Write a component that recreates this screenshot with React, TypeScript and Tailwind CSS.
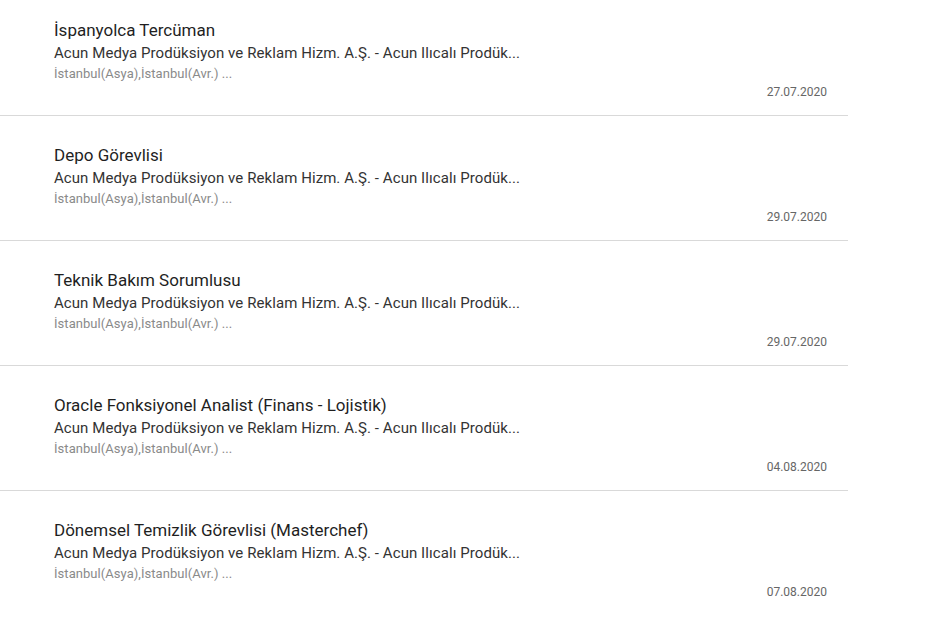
const jobs = [
  { title: 'İspanyolca Tercüman', date: '27.07.2020' },
  { title: 'Depo Görevlisi', date: '29.07.2020' },
  { title: 'Teknik Bakım Sorumlusu', date: '29.07.2020' },
  { title: 'Oracle Fonksiyonel Analist (Finans - Lojistik)', date: '04.08.2020' },
  { title: 'Dönemsel Temizlik Görevlisi (Masterchef)', date: '07.08.2020' },
];

const company = 'Acun Medya Prodüksiyon ve Reklam Hizm. A.Ş. - Acun Ilıcalı Prodük...';

export default function App() {
  return (
    <div className="h-[640px] overflow-hidden bg-white font-['Roboto',sans-serif]">
      <ul className="w-[848px] -mt-[9px]">
        {jobs.map((job) => (
          <li key={job.title} className="h-[125px] border-b border-[#d9d9d9] last:border-b-0 pl-[54px] pr-[21px] pt-[27px] flex flex-col">
            <div className="text-[17px] leading-[25px] text-[#1f1f1f]">{job.title}</div>
            <div className="text-[15px] leading-[21px] tracking-[0.07px] text-[#333333] whitespace-nowrap">{company}</div>
            <div className="text-[13px] leading-[20px] tracking-[0.05px] text-[#8a8a8a]">İstanbul(Asya),İstanbul(Avr.) ...</div>
            <div className="text-right text-xs leading-4 text-[#666666]">{job.date}</div>
          </li>
        ))}
      </ul>
    </div>
  );
}
